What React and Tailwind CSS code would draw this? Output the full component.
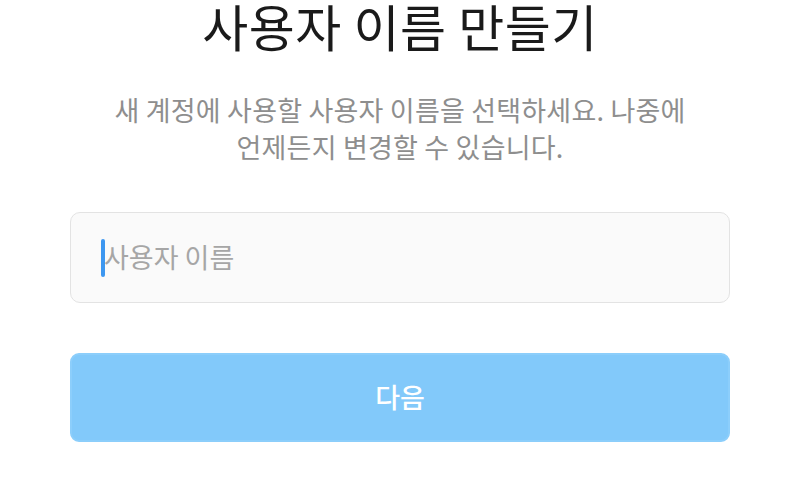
export default function App() {
  return (
    <div
      className="w-[796px] h-[488px] bg-white overflow-hidden flex flex-col items-center pl-[4px]"
      style={{ fontFamily: '"Noto Sans CJK KR", "Noto Sans", sans-serif' }}
    >
      <h1 className="text-[50px] leading-[50px] text-[#1a1a1a] tracking-[0.5px]">
        사용자 이름 만들기
      </h1>
      <p className="mt-[41px] text-[27px] leading-[37px] text-[#8e8e8e] text-center w-[640px] tracking-[0.2px]">
        새 계정에 사용할 사용자 이름을 선택하세요. 나중에
        <br />
        언제든지 변경할 수 있습니다.
      </p>
      <div className="mt-[47px] w-[660px] h-[91px] rounded-[10px] border border-[#e3e3e3] bg-[#fafafa] flex items-center px-[30px]">
        <span className="w-[4px] h-[38px] rounded-full bg-[#3d97f0]" />
        <span className="text-[27px] text-[#a6a6a6] ml-[-1px]">사용자 이름</span>
      </div>
      <button className="mt-[50px] w-[660px] h-[89px] rounded-[9px] bg-[#82c9fa] border-2 border-[#8ccefb] text-white text-[27px] font-medium flex items-center justify-center">
        다음
      </button>
    </div>
  );
}
